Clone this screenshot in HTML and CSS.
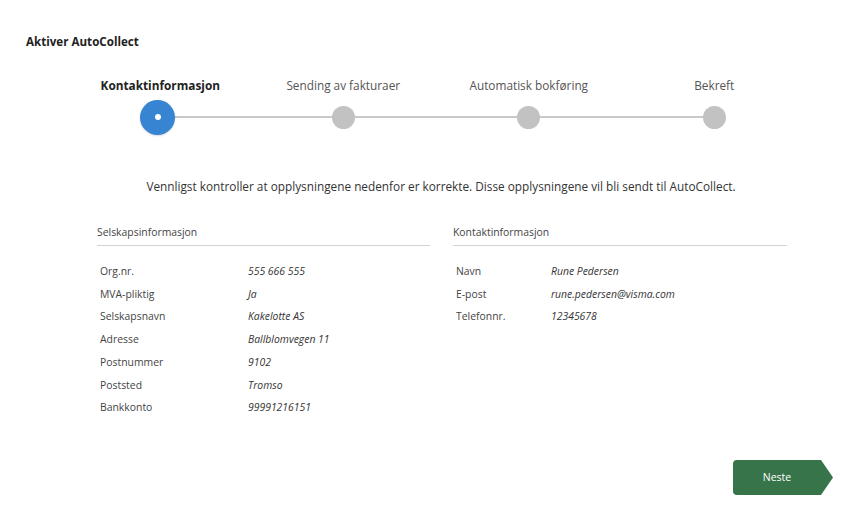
FILE: index.html
```html
<!DOCTYPE html>
<html lang="no">
<head>
    <meta charset="UTF-8">
    <meta name="viewport" content="width=device-width, initial-scale=1.0">
    <title>Aktiver AutoCollect</title>
    <link rel="stylesheet" href="styles.css">
</head>
<body>

    <div class="page">
        <h1>Aktiver AutoCollect</h1>

        <ol class="stepper">
            <li class="step active">
                <span class="step-label">Kontaktinformasjon</span>
                <span class="step-marker"><span class="dot"></span></span>
            </li>
            <li class="step">
                <span class="step-label">Sending av fakturaer</span>
                <span class="step-marker"><span class="dot"></span></span>
            </li>
            <li class="step">
                <span class="step-label">Automatisk bokføring</span>
                <span class="step-marker"><span class="dot"></span></span>
            </li>
            <li class="step">
                <span class="step-label">Bekreft</span>
                <span class="step-marker"><span class="dot"></span></span>
            </li>
        </ol>

        <p class="intro">Vennligst kontroller at opplysningene nedenfor er korrekte. Disse opplysningene vil bli sendt til AutoCollect.</p>

        <div class="info-grid">
            <div class="info-section company">
                <div class="section-header">Selskapsinformasjon</div>
                <div class="row"><span class="key">Org.nr.</span><span class="val">555 666 555</span></div>
                <div class="row"><span class="key">MVA-pliktig</span><span class="val">Ja</span></div>
                <div class="row"><span class="key">Selskapsnavn</span><span class="val">Kakelotte AS</span></div>
                <div class="row"><span class="key">Adresse</span><span class="val">Ballblomvegen 11</span></div>
                <div class="row"><span class="key">Postnummer</span><span class="val">9102</span></div>
                <div class="row"><span class="key">Poststed</span><span class="val">Tromso</span></div>
                <div class="row"><span class="key">Bankkonto</span><span class="val">99991216151</span></div>
            </div>
            <div class="info-section contact">
                <div class="section-header">Kontaktinformasjon</div>
                <div class="row"><span class="key">Navn</span><span class="val">Rune Pedersen</span></div>
                <div class="row"><span class="key">E-post</span><span class="val">rune.pedersen@visma.com</span></div>
                <div class="row"><span class="key">Telefonnr.</span><span class="val">12345678</span></div>
            </div>
        </div>

        <div class="footer">
            <button type="button" class="next-button">Neste</button>
        </div>
    </div>

</body>
</html>
```

FILE: styles.css
```css
html, body { margin: 0; padding: 0; background: #fff; }
body { font-family: 'Open Sans', 'Noto Sans', sans-serif; color: #333; }
.page { padding: 34px 28px 0 26px; }

h1 { font-size: 11.6px; line-height: 16px; font-weight: 700; color: #222; margin: 0; }

/* stepper */
.stepper { list-style: none; margin: 26px 0 0 39px; padding: 0; display: grid; grid-template-columns: repeat(4, 185.5px); }
.step { display: flex; flex-direction: column; align-items: center; gap: 5px; position: relative; }
.step-label { font-size: 11.8px; line-height: 18px; color: #555; white-space: nowrap; }
.step.active .step-label { font-weight: 700; color: #222; padding-left: 5px; }
.step-marker { height: 36px; display: flex; align-items: center; justify-content: center; position: relative; width: 100%; }
.step-marker::before { content: ""; position: absolute; left: 0; right: 0; top: 17px; height: 2px; background: #c9c9c9; }
.step:first-child .step-marker::before { left: 50%; }
.step:last-child .step-marker::before { right: 50%; }
.dot { position: relative; width: 23px; height: 23px; border-radius: 50%; background: #c2c2c2; }
.step.active .dot { width: 35px; height: 35px; background: #3784d3; display: flex; align-items: center; justify-content: center; box-shadow: 0 1px 2px rgba(0,0,0,.15); }
.step.active .dot::after { content: ""; width: 6px; height: 6px; border-radius: 50%; background: #fff; }

.intro { margin: 42px 0 0; text-align: center; font-size: 11.8px; line-height: 18px; color: #333; padding-left: 23px; }

/* info */
.info-grid { margin: 29px 0 0 71px; width: 690px; display: grid; grid-template-columns: 333px 334px; column-gap: 23px; }
.section-header { font-size: 10.4px; line-height: 16px; color: #444; padding-bottom: 5px; border-bottom: 1px solid #d2d2d2; margin-bottom: 14px; }
.row { display: flex; font-size: 10.4px; line-height: 22.7px; padding-left: 3px; }
.key { color: #444; flex: 0 0 auto; }
.val { font-style: italic; color: #333; }
.company .key { width: 148px; }
.contact .key { width: 95px; }

/* footer */
.footer { display: flex; justify-content: flex-end; margin-top: 41px; }
.next-button {
    width: 100px; height: 35px; padding: 0 12px 0 0;
    background: #37744a; color: #fff; border: none; border-radius: 4px;
    font-family: 'Open Sans', sans-serif; font-size: 10.5px; cursor: pointer;
    clip-path: polygon(0 0, 88px 0, 100% 50%, 88px 100%, 0 100%);
}
.next-button:hover { background: #2e6440; }
```
